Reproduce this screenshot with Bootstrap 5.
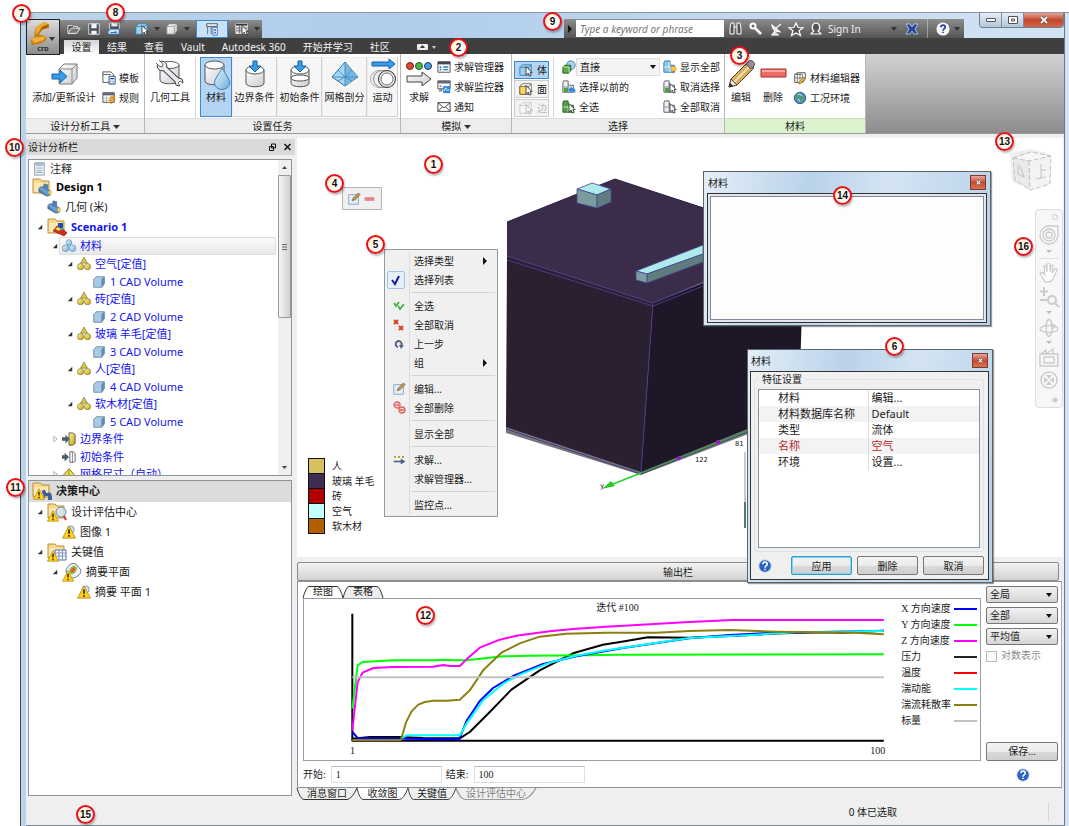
<!DOCTYPE html>
<html lang="zh-CN">
<head>
<meta charset="utf-8">
<meta name="viewport" content="width=device-width, initial-scale=1">
<title>CFD</title>
<link href="https://cdn.jsdelivr.net/npm/bootstrap@5.3.0/dist/css/bootstrap.min.css" rel="stylesheet">
<style>
:root{--ui:"Noto Sans","Noto Sans CJK SC",sans-serif;--song:"Liberation Serif","Noto Sans CJK SC",serif;--caret:url("data:image/svg+xml,%3Csvg xmlns='http://www.w3.org/2000/svg' viewBox='0 0 8 8'%3E%3Cpath d='M1 2h6L4 6z' fill='%23111'/%3E%3C/svg%3E")}
body{font-family:var(--ui);font-size:10px;line-height:14px;color:#1b1b1b;background:#fff}
button,input,select{font-family:inherit;font-size:inherit;line-height:14px;color:inherit}
button{padding:0;border:0;background:none;white-space:nowrap}
svg{display:block;flex:none;overflow:visible}
.i14{width:14px;height:14px}.i16{width:16px;height:16px}.i20{width:20px;height:20px}.i32{width:32px;height:32px}
.frame{margin:12px 0 0 20px;min-height:calc(100vh - 12px);border-left:1px solid #3f4a56;border-top:1px solid #8f98a2;padding:0 4px 2px 5px;background:linear-gradient(90deg,#bcd3ea,#aecdeb 35%,#bdd5ee 60%,#d3e3f3)}
.frame-body{border-right:1px solid #6c7885;border-bottom:1px solid #7c8793}
/* title bar */
.titlebar{height:25px}
.appbtn{left:0;top:6px;width:34px;height:36px;border:1px solid #222;background:linear-gradient(#dcdcdc,#8b8b8b);z-index:3}
.app-logo{left:4px;top:2px}
.qat{margin:7px 0 0 34px;width:202px;height:18px;background:linear-gradient(#8c8c8c,#505050)}
.qat button{height:18px;display:flex;align-items:center;justify-content:center;width:20px}
.qat .on{width:32px;background:#c9e2fa;border:1px solid #3f88cf}
.qat .narrow{width:10px}
.car{width:0;height:0;border:3px solid transparent;border-top:4px solid #333;border-bottom:0}
.infobar{margin:6px 100px 0 auto;width:400px;height:19px;background:linear-gradient(#8c8c8c,#545454);color:#f1f1f1}
.infobar input{width:148px;height:17px;border:0;border-radius:0;padding:2px 4px;font-style:italic;background:#fff;color:#555}
.infobar input::placeholder{color:#777}
.winbtns{right:0;top:0;height:15px;border:1px solid #6f7f8f;border-top:0;border-radius:0 0 4px 4px;overflow:hidden}
.winbtns button{width:22px;border-right:1px solid #7c8d9d;background:linear-gradient(#e6eef6,#b4c6d8);display:flex;align-items:center;justify-content:center}
.winbtns .x{width:39px;border:0;background:linear-gradient(#e2a595,#c4472f 50%,#cf6648)}
/* tabs */
.tabrow{height:16px;background:#3f3f3f;color:#f2f2f2;padding:2px 0 0 38px;gap:17px}
.tabrow a{color:inherit;text-decoration:none;height:14px;text-align:center;white-space:nowrap}
.tabrow a.on{background:linear-gradient(#d4d4d4,#fff);color:#222;width:35px;margin-right:-9px}
/* ribbon */
.ribbon{height:80px;background:#fff;border-bottom:1px solid #999}
.pane-grp{display:flex;flex-direction:column;flex:none;border-right:1px solid #b7b7b7}
.pane-main{height:64px;padding-top:3px;display:flex}
.pane-ttl{height:15px;background:#ededed;border-top:1px solid #ddd;text-align:center;line-height:14px}
.g1{width:119px}.g2{width:256px}.g3{width:111px}.g4{width:213px}.g5{width:141px}
.g5 .pane-ttl{background:#dcf3cf;border-color:#c4e0b5}
.ribbon-rest{background:linear-gradient(#d2d2d2,#8d8d8d)}
.bigb{display:flex;flex-direction:column;align-items:center;height:60px;border:1px solid transparent}
.bigb.boxed{background:#f6f6f6;border-color:#ececec #cfcfcf #cfcfcf #ececec}
.bigb.on{background:#b4d4f3;border-color:#3b88d3}
.w31{width:31px}.w32{width:32px}.w36{width:36px}.w45{width:45px}.w50{width:50px}.w76{width:76px}
.smb{display:flex;align-items:center;gap:3px;height:20px}
.togs{margin:0 0 0 2px}
.tog{width:35px;height:18px;display:flex;align-items:center;gap:4px;padding-left:4px;border:1px solid #ccc;background:#f3f3f3;margin-bottom:1px}
.tog.on{background:#b4d4f3;border-color:#3b88d3}
.tog:disabled{color:#bbb;opacity:1}
.selcol{width:101px}
.vline{width:1px;background:#d6d6d6}
.pick{appearance:none;width:84px;height:18px;border:1px solid #ddd;background:#f4f4f4 var(--caret) right 2px center/8px no-repeat;padding:0 3px;border-radius:0}
/* work area */
.work{background:#efefef;padding-top:4px}
.side{width:271px;padding:1px 5px 3px 2px;flex:none}
.side-head{background:#d9d9d9;height:16px;margin:0 -3px 4px -2px;padding:0 4px 0 2px}
.treebox{border:1px solid #8d939c;background:#fff;flex:1 1 0;min-height:0;font-size:11px;position:relative;overflow:hidden}
.tree{list-style:none;margin:0;padding:0}
.tree li{display:flex;align-items:center;gap:4px;height:18px;padding-left:3px;white-space:nowrap}
.tree .exp{width:15px;margin-right:-4px;display:flex;padding-left:5px}
.blue{color:#1414f0}
.tree .t17{height:17px}.tree .t20{height:20px}
.tree .l1{padding-left:18px}.tree .l2{padding-left:18px}.tree .l3{padding-left:33px}.tree .l4{padding-left:63px}.tree .l2x{padding-left:33px}.tree .l3x{padding-left:48px}
.tree .selrow{margin-right:2px;background:linear-gradient(#fafafa,#e9e9e9);border:1px solid #ddd;border-radius:2px;margin-left:30px;padding-left:2px}
.tree .selrow .exp{position:absolute;left:18px}
.sbar{width:13px;background:#efefef;flex:none}
.sbar .arrow{height:15px;width:13px}
.sbar .grip{height:143px;border:1px solid #999;border-radius:1px;background:linear-gradient(90deg,#f5f5f5,#cfcfcf)}
.gone{background:#dcdcdc;font-weight:bold}
.tree.wide li{height:20px}.tree.wide li:first-child{height:21px}
/* viewport */
.view{background:#fff;position:relative;flex:1 1 auto;min-height:419px;z-index:2;margin-right:1px}
.scene{position:absolute;left:209px;top:40px;width:300px;height:320px}
.legend-bar{position:absolute;left:11px;top:320px}
.legend-bar div{height:15px;display:flex;gap:7px;align-items:center}
.legend-bar i{width:17px;height:15px;border:1px solid #111;border-bottom:0}
.legend-bar div:last-child i{height:16px;border-bottom:1px solid #111}
.mini{position:absolute;left:45px;top:49px;width:40px;height:23px;border:1px solid #b5b5b5;background:#f0f0f0}
.ctx{position:absolute;left:87px;top:111px;width:114px;border:1px solid #999;background:#f0f0f0;padding:1px 2px 2px}
.ctx button{display:flex;align-items:center;width:100%;height:19px;text-align:left}
.ctx .slot{width:24px;display:flex;justify-content:center;margin-right:3px}
.ctx .chk{width:18px;height:18px;border:1px solid #9dc3ea;border-radius:2px;background:#e6f0fa;margin-right:9px;align-items:center}
.ctx hr{height:1px;border:0;background:#d5d5d5;opacity:1;margin:3px 0 3px 24px}
.ctx:before{content:"";position:absolute;left:24px;top:2px;bottom:2px;width:1px;background:#ddd}
.dlg{position:absolute;border:1px solid #5b6570;background:linear-gradient(100deg,#e4eef7,#b9d2ea 35%,#d4e4f3 60%,#b7d1ea);box-shadow:1px 1px 1px #4448;display:flex;flex-direction:column;padding:0 3px 2px}
.dlg-ttl{height:21px;display:flex;align-items:center;justify-content:space-between;padding:0 1px 0 1px}
.dlg-x{width:16px;height:15px;border:1px solid #7c3a30;background:linear-gradient(#e6a899,#c84b32 50%,#d87253);display:flex;align-items:center;justify-content:center}
.dlg-in{border:1px solid #333;flex:1}
.dlg-a{left:406px;top:33px;width:288px;height:155px}
.dlg-a .dlg-in{padding:2px;background:#e2e4ee}
.dlg-a .dlg-in div{background:#fdfdfd;border:1px solid #889;height:100%}
.dlg-b{left:450px;top:211px;width:246px;height:234px;padding:0 3px 2px 2px}
.dlg-b .dlg-in{background:#f0f0f0;padding:1px 4px 4px 3px;display:flex;flex-direction:column}
.dlg-b fieldset{border:1px solid #dbe3ea;border-radius:3px;margin-top:6px;padding:0 3px 3px;flex:1;display:flex}
.dlg-b legend{font-size:10px;line-height:14px;width:auto;float:none;margin:-8px 0 0 1px;padding:0 3px;background:#f0f0f0;position:absolute}
.propwrap{border:1px solid #8d939c;background:#fff;margin-top:9px;flex:1}
.prop{width:100%;font-size:11px;line-height:16px;table-layout:fixed}
.prop td{padding:0 0 0 3px;border:0}.prop td:first-child{width:109px;padding-left:19px;border-right:1px solid #ddd}
.prop tr:nth-child(even){background:#f3f3f3}
.red{color:#b32a2a}
.winb{border:1px solid #777;border-radius:2px;background:linear-gradient(#f3f3f3,#ececec 50%,#dadada 51%,#cfcfcf);height:19px;width:61px}
.winb.def{border-color:#2c9fca;box-shadow:inset 0 0 0 1px #7fd4f0}
.btn-row{gap:5px}
.cube{position:absolute;right:9px;top:11px;width:46px;height:44px}
.navb{position:absolute;right:0;top:71px;width:28px;height:199px;border:1px solid #ddd;border-radius:4px;background:#f7f7f7;display:flex;flex-direction:column;align-items:center;padding-top:14px;color:#c9cbcd}
.navb button{display:block}
.tiny{width:0;height:0;border:3px solid transparent;border-top-color:#bbb;border-bottom:0;margin:4px 0 5px}
/* output */
.outbtn{height:19px;margin:5px 5px 0 0;border:1px solid #8a8a8a;border-radius:2px;background:linear-gradient(#f2f2f2,#d2d2d2)}
.outp{background:#fff;border:1px solid #8d939c;border-right-color:#aaa;margin-right:2px;padding:4px 3px 4px 5px;font-family:var(--song)}
.tabsh{position:relative;height:12px;line-height:12px;text-align:center}
.tabsh svg{position:absolute;inset:0;width:100%;height:100%}
.tabsh span{position:relative}
.s40{width:40px}.s48{width:48px}.s51{width:51px}.s60{width:60px}.s80{width:80px}
.plotbox{border:1px solid #999ea6;height:163px;padding:2px 3px 0 46px}
.plot{width:100%;height:134px}
.plot-h{height:14px;margin-bottom:-5px;text-align:center}
.key{width:76px;margin-left:16px}
.key li{height:16px;line-height:16px;display:flex;justify-content:space-between;align-items:center;white-space:nowrap}
.key hr{width:23px;height:2px;margin:0;border:0;opacity:1}
.field{width:111px;height:17px;border:1px solid #dcdfe4;border-top-color:#b9bcc2;padding:0 4px;margin:0 4px 0 5px;border-radius:0}
.ctl{width:72px;flex:none;margin-left:5px;display:flex;flex-direction:column}
.ctl select{appearance:none;width:100%;height:17px;border:1px solid #777;border-radius:2px;padding:0 3px;margin-bottom:4px;background:var(--caret) right 4px center/8px no-repeat,linear-gradient(#f2f2f2,#d5d5d5)}
.ctl input[type=checkbox]{appearance:none;width:11px;height:11px;border:1px solid #bbb;background:#fafafa;margin:0}
.runrow{margin-top:5px}
.btabs{font-family:var(--song);height:11px}
.status{height:26px;padding-right:15px;background:#efefef;gap:151px}
/* numbered callouts */
.pin{position:absolute;width:19px;height:19px;margin:-10px 0 0 -10px;border-radius:50%;border:2px solid #e8101a;background:radial-gradient(circle at 60% 65%,#fff 10%,#fdeccb);box-shadow:1px 2px 2px #0004;font:bold 10px/15px "Liberation Sans",sans-serif;text-align:center;color:#111;z-index:9}
.p1{left:434px;top:165px}.p2{left:459px;top:48px}.p3{left:740px;top:56px}.p4{left:335px;top:184px}.p5{left:376px;top:245px}.p6{left:895px;top:347px}.p7{left:22px;top:14px}.p8{left:116px;top:13px}.p9{left:553px;top:22px}.p10{left:15px;top:148px}.p11{left:16px;top:488px}.p12{left:426px;top:616px}.p13{left:1005px;top:142px}.p14{left:843px;top:196px}.p15{left:86px;top:815px}.p16{left:1024px;top:247px}
</style>
</head>
<body>
<svg width="0" height="0" class="position-absolute" aria-hidden="true">
<defs>
<linearGradient id="gb" x2="1" y2="1"><stop stop-color="#e8f5fd"/><stop offset="1" stop-color="#6fb0dc"/></linearGradient>
<linearGradient id="gg" x2="1" y2="1"><stop stop-color="#fff"/><stop offset="1" stop-color="#c9cdd2"/></linearGradient>
<linearGradient id="gy" x2="1" y2="1"><stop stop-color="#fff6a0"/><stop offset="1" stop-color="#c79f0c"/></linearGradient>
<symbol id="cubeg" viewBox="0 0 16 16"><path d="M2 5l3-3h9v8l-3 4H2z" fill="url(#gg)" stroke="#777"/><path d="M2 5h9v9M11 5l3-3" fill="none" stroke="#999"/></symbol>
<symbol id="cubeb" viewBox="0 0 16 16"><path d="M2 5l3-3h9v8l-3 4H2z" fill="#a9c9e6" stroke="#6c8aa6"/><path d="M11 5v9l3-4V2z" fill="#5c8fba" stroke="#6c8aa6" stroke-width=".6"/></symbol>
<symbol id="cur" viewBox="0 0 16 16"><path d="M8 4v10l2.500-2.500L12 15l2-1-1.500-3H15z" fill="#fff" stroke="#222" stroke-width=".9"/></symbol>
<symbol id="selb" viewBox="0 0 16 16"><path d="M1 5l3-3h10v8l-3 4H1z" fill="#9bd0f0" stroke="#3d7ba8"/><path d="M1 5h10v9M11 5l3-3" fill="none" stroke="#3d7ba8"/><use href="#cur"/></symbol>
<symbol id="sely" viewBox="0 0 16 16"><path d="M1 5l3-3h10v8l-3 4H1z" fill="#fff" stroke="#665"/><path d="M1 5h10v9H1z" fill="#ffd954" stroke="#665"/><path d="M11 5l3-3" stroke="#665"/><use href="#cur"/></symbol>
<symbol id="seln" viewBox="0 0 16 16"><g opacity=".35"><path d="M1 5l3-3h10v8l-3 4H1z" fill="#fff" stroke="#777"/><path d="M1 5h10v9M11 5l3-3" fill="none" stroke="#777"/><use href="#cur"/></g></symbol>
<symbol id="add" viewBox="0 0 32 32"><path d="M11 11l5-5h13v14l-5 6H11z" fill="url(#gg)" stroke="#777"/><path d="M11 11h13v14M24 11l5-5" fill="none" stroke="#888"/><path d="M4 16h8v-4l7 6.500-7 6.500v-4H4z" fill="#3a9be6" stroke="#1561a5"/></symbol>
<symbol id="tmpl" viewBox="0 0 16 16"><path d="M1 1h9l3 3v9H1z" fill="#fff" stroke="#444"/><path d="M1 4h9" stroke="#555"/><path d="M8 6h7v9H8z" fill="#e6f1fb" stroke="#246"/><path d="M9.500 8h4v1.500h-4zM9.500 11h1v1h-1zM12 11h1v1h-1zM9.500 13h1v1h-1zM12 13h1v1h-1z" fill="#247"/></symbol>
<symbol id="rule" viewBox="0 0 16 16"><path d="M1 2h13v11H1z" fill="#fff" stroke="#444"/><path d="M1 2h13v3H1z" fill="#667"/><path d="M1 8h13M1 10.500h13M5 5v8M9.500 5v8" stroke="#999" stroke-width=".7"/><path d="M11 6l-3 5h3l-1 4 5-6h-3l2-3z" fill="#ffae1e" stroke="#c46c00" stroke-width=".6"/></symbol>
<symbol id="tool" viewBox="0 0 32 32"><path d="M6 7v15c0 5 19 5 19 0V7" fill="url(#gg)" stroke="#555"/><ellipse cx="15.500" cy="7" rx="9.500" ry="3.500" fill="#fff" stroke="#555"/><path d="M8 8L25 24" stroke="#444" stroke-width="6"/><circle cx="8" cy="8" r="4.800" fill="#e9ebee" stroke="#444"/><circle cx="25" cy="24" r="4" fill="#e9ebee" stroke="#444"/><path d="M8 8L25 24" stroke="#e9ebee" stroke-width="4"/><path d="M3 3l5 5M30 29l-5-5" stroke="#fff" stroke-width="3.500"/><path d="M5 2l4 4-1 3-3-1-3-3M29 25l-3-2-2 2 2 3" stroke="#444" fill="none" stroke-width=".8"/></symbol>
<symbol id="mat" viewBox="0 0 32 32"><path d="M5 7v16c0 5 19 5 19 0V7" fill="url(#gg)" stroke="#555"/><ellipse cx="14.500" cy="7" rx="9.500" ry="4" fill="#fff" stroke="#555"/><path d="M22 10c4 7 7.500 11 7.500 15a7.500 6.500 0 01-15 0c0-4 4-8 7.500-15z" fill="url(#gb)" stroke="#3a7fb5"/></symbol>
<symbol id="bc" viewBox="0 0 32 32"><path d="M7 12v13c0 5 18 5 18 0V12" fill="url(#gg)" stroke="#555"/><ellipse cx="16" cy="12" rx="9" ry="4" fill="#fff" stroke="#555"/><path d="M14 3h4v5h4l-6 6-6-6h4z" fill="#3a9be6" stroke="#1561a5"/></symbol>
<symbol id="initc" viewBox="0 0 32 32"><path d="M7 12v13c0 5 18 5 18 0V12" fill="url(#gg)" stroke="#555"/><ellipse cx="16" cy="12" rx="9" ry="4" fill="#fff" stroke="#555"/><path d="M7 20c0 4 18 4 18 0s-18-4-18 0" fill="#fff" stroke="#555"/><path d="M14 3h4v5h4l-6 6-6-6h4z" fill="#3a9be6" stroke="#1561a5"/></symbol>
<symbol id="mesh" viewBox="0 0 32 32"><path d="M16 4L3 19l13 9 13-9z" fill="#a5d6f2" stroke="#2d6f9f"/><path d="M16 4v24l13-9z" fill="#74b8e0"/><path d="M16 4v24M3 19h26M9 12l7 7 7-7M9 23l7-4 7 4" stroke="#3b82b2" fill="none" stroke-width=".8"/></symbol>
<symbol id="motion" viewBox="0 0 32 32"><path d="M5 4h17V1l6 5-6 5V8H5z" fill="#3a9be6" stroke="#1561a5"/><circle cx="12" cy="21" r="8.500" fill="#f4f4f4" stroke="#aaa"/><circle cx="15" cy="21" r="8.500" fill="#eee" stroke="#888"/><circle cx="20" cy="21" r="8.500" fill="#e2e2e2" stroke="#333"/><circle cx="20" cy="21" r="6" fill="#fff" stroke="#777"/></symbol>
<symbol id="solve" viewBox="0 0 32 32"><circle cx="7" cy="8" r="3.500" fill="#e3482c" stroke="#622"/><circle cx="16" cy="8" r="3.500" fill="#46b94b" stroke="#252"/><circle cx="25" cy="8" r="3.500" fill="#4a9be8" stroke="#235"/><path d="M4 18h15v-4l9 7-9 7v-4H4z" fill="url(#gg)" stroke="#444"/></symbol>
<symbol id="lst" viewBox="0 0 16 16"><path d="M1 2h14v12H1z" fill="#fff" stroke="#445"/><path d="M1 2h14v3H1z" fill="#445"/><path d="M3 7h2v2H3zM3 10h2v2H3z" fill="#2d7bd0"/><path d="M7 8h6M7 11h6" stroke="#2d7bd0" stroke-width="1.500"/></symbol>
<symbol id="mon" viewBox="0 0 16 16"><path d="M1 1h14v9H1z" fill="#fff" stroke="#445"/><path d="M1 1h14v3H1z" fill="#667"/><path d="M3 6h2v2H3zM3 9h3v4H2z" fill="#888"/><path d="M7 7h8v8H7z" fill="#2d87e0"/><path d="M8 13l2-4 2 3 2-1" stroke="#fff" fill="none"/></symbol>
<symbol id="mail" viewBox="0 0 16 16"><path d="M1 3h14v10H1zl7 6 7-6M1 13l5-5M15 13l-5-5" fill="#fff" stroke="#333"/></symbol>
<symbol id="direct" viewBox="0 0 16 16"><circle cx="10" cy="6" r="5" fill="#a8d4f3" stroke="#3679ab"/><path d="M1 8l2-2h7v6l-2 3H1z" fill="#5aa94b" stroke="#245c1c"/><path d="M1 8h7v7" fill="none" stroke="#cfeec4"/></symbol>
<symbol id="sg" viewBox="0 0 16 16"><path d="M1 3l1-2h5v5h6v8H1z" fill="#51a044" stroke="#235c1c"/><path d="M1 8h6v6M7 6v3" stroke="#cdeec4" fill="none"/></symbol>
<symbol id="sw" viewBox="0 0 16 16"><path d="M1 3l1-2h5v5h6v8H1z" fill="#eceef0" stroke="#556"/><path d="M1 8h6v6M7 6v3" stroke="#889" fill="none"/></symbol>
<symbol id="sprev" viewBox="0 0 16 16"><use href="#sw"/><path d="M2 9h5v5H2z" fill="#51a044"/><path d="M7 11l4-4v2c4 0 5 2 4 6-1-2-2-2-4-2v2z" fill="#2f8be0"/></symbol>
<symbol id="sall" viewBox="0 0 16 16"><use href="#sg"/><use href="#cur"/></symbol>
<symbol id="show" viewBox="0 0 16 16"><path d="M1 3l1-2h6v5h5v8H1z" fill="#8cc8ee" stroke="#336e9c"/><path d="M1 8h7v6M7 2v6" stroke="#e7f5fd" fill="none"/><circle cx="12" cy="10" r="3" fill="#ffc73c" stroke="#b97900" stroke-width=".6"/><path d="M11 13h2v2h-2z" fill="#777"/></symbol>
<symbol id="desel" viewBox="0 0 16 16"><use href="#sw"/><path d="M2 9h5v5H2z" fill="#51a044"/><use href="#cur"/></symbol>
<symbol id="none" viewBox="0 0 16 16"><use href="#sw"/><use href="#cur"/></symbol>
<symbol id="pencil" viewBox="0 0 32 32"><path d="M4 29l2-8L23 4l6 6-17 17z" fill="#d6ad62" stroke="#5b4520"/><path d="M9 24L26 7" stroke="#f5dfa9" stroke-width="2"/><path d="M21 6l3-3c3-2 7 2 5 5l-3 3z" fill="#998a98" stroke="#555"/><path d="M4 29l2-8 6 6z" fill="#f1e2c6" stroke="#555"/><path d="M4 29l1-4 3 3z" fill="#222"/></symbol>
<symbol id="minus" viewBox="0 0 32 32"><path d="M4 11h25v8H4z" fill="#ef6a64" stroke="#a32f2c"/><path d="M5 12h23v2H5z" fill="#f8a8a2"/></symbol>
<symbol id="mated" viewBox="0 0 16 16"><path d="M2 4l3-2h9v7l-3 4H2z" fill="#fff" stroke="#444"/><path d="M2 4h9v9M5 2v11M8 2v11M2 8h12" fill="none" stroke="#555" stroke-width=".8"/><path d="M6 14l6-7 2 2-6 6z" fill="#f1b33b" stroke="#8a5c08" stroke-width=".7"/></symbol>
<symbol id="globe" viewBox="0 0 16 16"><circle cx="8" cy="8" r="6.500" fill="#4b93c9" stroke="#2b4b63"/><path d="M3 4l4-1 3 3 3 1-2 3-3 4-1-4-4-2z" fill="#4f9a72"/><path d="M5 4c2-1 4 0 5 2M6 9l2 3" stroke="#e4f0f5" fill="none"/></symbol>
<symbol id="open" viewBox="0 0 16 16"><path d="M1 12V4h5l1 1h5v2" fill="#555" stroke="#e8e8e8"/><path d="M1 13l4-6h10l-4 6z" fill="#777" stroke="#fff"/></symbol>
<symbol id="save" viewBox="0 0 16 16"><path d="M2 2h12v12H2z" fill="#47505d" stroke="#e6e6e6"/><path d="M5 2h6v5H5zM5 10h6v4H5z" fill="#f4f4f4"/></symbol>
<symbol id="sview" viewBox="0 0 16 16"><path d="M3 1h11v8H3z" fill="#47505d" stroke="#e6e6e6"/><path d="M5 1h7v4H5z" fill="#eee"/><path d="M1 11l3-3h10v6H1z" fill="#cfe4f7" stroke="#245c96"/><path d="M4 12h7l-2-2" fill="none" stroke="#1a64b4"/></symbol>
<symbol id="layout" viewBox="0 0 16 16"><path d="M2 2h12v3H2z" fill="#fff" stroke="#345"/><path d="M3 5v9M7 5v9" stroke="#567"/><path d="M9 6h5v9H9z" fill="#fff" stroke="#2a6cb0"/><path d="M10.500 8h2v2h-2zM10.500 11h2v2h-2z" fill="#2a6cb0"/></symbol>
<symbol id="tblc" viewBox="0 0 16 16"><path d="M1 2h13v11H1z" fill="#ddd" stroke="#f4f4f4"/><path d="M1 2h13v2H1z" fill="#333"/><path d="M1 7h13M1 10h13M5 4v9" stroke="#666"/><use href="#cur"/></symbol>
<symbol id="logo" viewBox="0 0 20 24"><path d="M4 6L13 0l5 2v4l-7 2-3 5 8 2-1 4-4 3-10 2-3-5 5-2z" fill="#c97c10"/><path d="M4 6L13 0l5 2-7 3-4 6-2 2z" fill="#efac35"/><path d="M0 18l5-2 10-1-3 4-9 3z" fill="#f3b23e"/><path d="M11 5l7-3v4l-7 2-3 4z" fill="#a9640a"/></symbol>
<symbol id="note" viewBox="0 0 16 16"><path d="M3 1h11v14H3z" fill="#e8eef3" stroke="#8a99a6"/><path d="M5 4h7M5 7h7M5 10h7M5 12h7" stroke="#9aabba"/><path d="M3 1h11v2H3z" fill="#9db0c0"/></symbol>
<symbol id="fold" viewBox="0 0 20 20"><path d="M1 2h7l2 2h7v12H1z" fill="#f6d98c" stroke="#b9903b"/><path d="M2 6h14v9H2z" fill="#fbe8b3"/></symbol>
<symbol id="geo" viewBox="0 0 16 16"><path d="M1 6l3-2 2 1 1-4 4 1v5l3 2v5l-4 1-9-5z" fill="#4f83b5" stroke="#355a7e" stroke-width=".7"/><path d="M1 6l3-1 8 5-1 4z" fill="#6da2d2"/><ellipse cx="13.500" cy="11" rx="1.800" ry="2.600" fill="#f4df43" stroke="#876" stroke-width=".5"/></symbol>
<symbol id="des" viewBox="0 0 20 20"><use href="#fold"/><use href="#geo" x="6" y="6" width="14" height="14"/></symbol>
<symbol id="scn" viewBox="0 0 20 20"><use href="#fold"/><path d="M6 14l4-5 5 2 5 5-3 3z" fill="#d8281c" stroke="#622" stroke-width=".6"/><path d="M11 6h5v6h-5z" fill="#2748b8"/><path d="M8 12l3-2 3 2-2 2z" fill="#f2df2c"/><path d="M13 11h3v2h-3z" fill="#2cb7a8"/></symbol>
<symbol id="matb" viewBox="0 0 16 16"><g stroke="#3d7098" stroke-width=".6"><circle cx="8" cy="4" r="3.200" fill="url(#gb)"/><circle cx="4" cy="10.500" r="3.800" fill="url(#gb)"/><circle cx="12" cy="10.500" r="3.800" fill="url(#gb)"/></g></symbol>
<symbol id="maty" viewBox="0 0 16 16"><path d="M8 0l4 7H4z" fill="#d9c54d" stroke="#665a1c" stroke-width=".6"/><g stroke="#665a1c" stroke-width=".6"><circle cx="4" cy="11" r="3.600" fill="url(#gy)"/><circle cx="12" cy="11" r="3.600" fill="url(#gy)"/></g></symbol>
<symbol id="bct" viewBox="0 0 16 16"><path d="M8 1h4l3 2v10l-3 2H8z" fill="url(#gy)" stroke="#554"/><path d="M0 6h4V3l5 5-5 5v-3H0z" fill="#46606f"/></symbol>
<symbol id="ict" viewBox="0 0 16 16"><path d="M9 2h4l2 2v9l-2 1H9z" fill="#fff" stroke="#555"/><path d="M12 2v12" stroke="#888"/><path d="M0 6h3V3l5 5-5 5v-3H0z" fill="#46606f"/></symbol>
<symbol id="msh" viewBox="0 0 16 16"><path d="M8 2L0 11l8 5 8-5z" fill="#f2df47" stroke="#776c1e"/><path d="M8 2v14M0 11h16" stroke="#9a8d22"/></symbol>
<symbol id="warn" viewBox="0 0 16 16"><path d="M8 1l7.500 14H.5z" fill="#ffcf19" stroke="#a87d00" stroke-width=".8"/><path d="M8 5v5M8 11.500v2" stroke="#111" stroke-width="1.700"/></symbol>
<symbol id="dec" viewBox="0 0 20 20"><use href="#fold"/><path d="M10 11c0-3 3-3 4 0s5-3 6 5v3h-4v-4h-3v3z" fill="#3d5f9c"/><use href="#warn" x="1" y="7" width="12" height="12"/></symbol>
<symbol id="dev" viewBox="0 0 20 20"><use href="#fold"/><circle cx="14" cy="10" r="5" fill="#cfe3f2cc" stroke="#6d8ba6"/><path d="M17 14l2 4" stroke="#c33" stroke-width="2"/><use href="#warn" x="0" y="8" width="12" height="12"/></symbol>
<symbol id="img" viewBox="0 0 16 16"><circle cx="10" cy="5" r="4" fill="#cfe3f2" stroke="#7894ab"/><use href="#warn"/></symbol>
<symbol id="keyv" viewBox="0 0 20 20"><use href="#fold"/><path d="M8 8h11v10H8z" fill="#fff" stroke="#4b6ea4"/><path d="M8 11h11M8 14h11M12 8v10M15.500 8v10" stroke="#7795c4"/><use href="#warn" x="0" y="8" width="12" height="12"/></symbol>
<symbol id="sum" viewBox="0 0 20 20"><path d="M4 10c0-6 6-10 10-8l5 6c0 5-5 8-9 8z" fill="#eef3f8" stroke="#6e7e8e"/><ellipse cx="11" cy="8" rx="3.500" ry="5" transform="rotate(35 11 8)" fill="#8fce52"/><ellipse cx="11" cy="8" rx="1.800" ry="3" transform="rotate(35 11 8)" fill="#e3562e"/><use href="#warn" x="0" y="8" width="12" height="12"/></symbol>
<symbol id="ep" viewBox="0 0 8 8"><path d="M7 1v6H1z" fill="#333"/></symbol>
<symbol id="cl" viewBox="0 0 8 8"><path d="M2 1v6l4-3z" fill="#fff" stroke="#999" stroke-width=".8"/></symbol>
<symbol id="edit" viewBox="0 0 16 16"><path d="M2 3h11v11H2z" fill="#e3eefb" stroke="#86a1c0"/><path d="M6 10l1-3 6-6 2 2-6 6z" fill="#c99a48" stroke="#5a4320" stroke-width=".6"/></symbol>
<symbol id="help" viewBox="0 0 16 16"><circle cx="8" cy="8" r="7" fill="#2d62c4" stroke="#b4c7e8"/><path d="M5.500 6c0-3.500 5-3.300 5 0 0 2-2.500 1.800-2.500 4M8 11v1.700" stroke="#fff" stroke-width="1.800" fill="none"/></symbol>
<symbol id="xx" viewBox="0 0 8 8"><path d="M1 1l6 6M7 1L1 7" stroke="#444" stroke-width="3"/><path d="M1 1l6 6M7 1L1 7" stroke="#fff" stroke-width="1.800"/></symbol>
</defs>
</svg>

<div class="frame d-flex">
<div class="frame-body d-flex flex-column flex-grow-1 position-relative">
  <header class="titlebar d-flex position-relative">
    <button class="appbtn position-absolute" aria-label="CFD">
      <svg class="position-absolute app-logo" width="20" height="23"><use href="#logo"/></svg>
      <span class="car position-absolute end-0 top-50 me-1 mt-n1"></span>
      <svg width="32" height="34"><text x="16" y="31" font-size="6" font-weight="bold" text-anchor="middle" fill="#222">CFD</text></svg>
    </button>
    <div class="qat d-flex align-items-center">
      <span class="ms-1"></span>
      <button aria-label="打开"><svg class="i14"><use href="#open"/></svg></button>
      <button aria-label="保存"><svg class="i14"><use href="#save"/></svg></button>
      <button aria-label="保存视图"><svg class="i14"><use href="#sview"/></svg></button>
      <span class="ms-2"></span>
      <button aria-label="选择体"><svg class="i14"><use href="#selb"/></svg></button>
      <button class="narrow" aria-label="更多"><span class="car"></span></button>
      <button aria-label="显示"><svg class="i14"><use href="#cubeg"/></svg></button>
      <button class="narrow" aria-label="更多"><span class="car"></span></button>
      <button class="on ms-1" aria-label="布局"><svg class="i14"><use href="#layout"/></svg></button>
      <button class="ms-1" aria-label="表"><svg class="i14"><use href="#tblc"/></svg></button>
      <button class="narrow" aria-label="自定义"><span class="car"></span></button>
    </div>
    <div class="infobar d-flex align-items-center">
      <button class="px-1" aria-label="展开"><svg width="4" height="8"><path d="M0 0l4 4-4 4z" fill="#111"/></svg></button>
      <input type="text" placeholder="Type a keyword or phrase" aria-label="搜索">
      <div class="d-flex align-items-center gap-1 ps-1">
        <svg width="16" height="14" viewBox="0 0 16 14"><path d="M2 12V6l1-5h3v11zM9 12V1h3l1 5v6z" fill="#555" stroke="#fff"/><path d="M6 5h3" stroke="#fff"/></svg>
        <svg width="16" height="14" viewBox="0 0 16 14"><circle cx="5" cy="4" r="2.500" fill="#666" stroke="#fff" stroke-width="2"/><path d="M7 6l6 6" stroke="#fff" stroke-width="2.500"/></svg>
        <svg width="16" height="14" viewBox="0 0 16 14"><path d="M4 3c0 5 4 7 8 7zM8 6l5-4M7 9l-3 4h7" fill="#ddd" stroke="#fff" stroke-width="1.200"/></svg>
        <svg width="16" height="14" viewBox="0 0 16 14"><path d="M8 1l2 4.500 5 .3-4 3 1.500 4.700L8 11l-4.500 2.500L5 8.800l-4-3 5-.3z" fill="#555" stroke="#fff" stroke-width="1.200"/></svg>
        <svg width="16" height="14" viewBox="0 0 16 14"><path d="M3 12c0-2 3-2 3-3-3-2-2-8 2-8s5 6 2 8c0 1 3 1 3 3z" fill="#555" stroke="#fff" stroke-width="1.200"/></svg>
      </div>
      <button class="ms-1">Sign In</button>
      <span class="car ms-auto me-2"></span>
      <svg width="14" height="12" viewBox="0 0 14 12"><path d="M1 1h4l2 3 2-3h4l-3 5 3 5H9L7 8l-2 3H1l3-5z" fill="#22449b" stroke="#cdd9f2" stroke-width=".8"/></svg>
      <span class="mx-2 vline h-100 opacity-50"></span>
      <svg width="14" height="14" viewBox="0 0 16 16"><circle cx="8" cy="8" r="7.500" fill="#f6f8fc"/><path d="M5.500 6c0-3.500 5-3.300 5 0 0 2-2.500 1.800-2.500 4M8 11v1.700" stroke="#21449c" stroke-width="2" fill="none"/></svg>
      <span class="car ms-1 me-1"></span>
    </div>
    <div class="winbtns d-flex position-absolute">
      <button aria-label="最小化"><svg width="10" height="4"><path d="M.5.500h9v3h-9z" fill="#fff" stroke="#555"/></svg></button>
      <button aria-label="还原"><svg width="10" height="8"><path d="M.5.500h9v7h-9zM3.500 3h3v2h-3z" fill="#fff" stroke="#555"/></svg></button>
      <button class="x" aria-label="关闭"><svg width="8" height="8"><use href="#xx"/></svg></button>
    </div>
  </header>

  <nav class="tabrow d-flex">
    <a href="#" class="on">设置</a><a href="#">结果</a><a href="#">查看</a><a href="#">Vault</a><a href="#">Autodesk 360</a><a href="#">开始并学习</a><a href="#">社区</a>
    <svg class="mt-1 ms-2" width="20" height="7"><rect x="2" width="11" height="6" rx="1" fill="#eee"/><path d="M5 4l2.500-3L10 4z" fill="#333"/><path d="M17 2h4l-2 3z" fill="#ccc"/></svg>
  </nav>

  <section class="ribbon d-flex">
    <div class="pane-grp g1">
      <div class="pane-main">
        <button class="bigb w76"><svg class="i32"><use href="#add"/></svg>添加/更新设计</button>
        <div class="d-flex flex-column justify-content-center h-100">
          <button class="smb"><svg class="i14"><use href="#tmpl"/></svg>模板</button>
          <button class="smb"><svg class="i14"><use href="#rule"/></svg>规则</button>
        </div>
      </div>
      <div class="pane-ttl">设计分析工具 <svg class="d-inline" width="7" height="6"><path d="M0 1h7L3.500 5z" fill="#333"/></svg></div>
    </div>
    <div class="pane-grp g2">
      <div class="pane-main">
        <button class="bigb w50"><svg class="i32"><use href="#tool"/></svg>几何工具</button>
        <span class="vline me-1"></span>
        <button class="bigb on w32"><svg class="i32"><use href="#mat"/></svg>材料</button>
        <button class="bigb boxed w45"><svg class="i32"><use href="#bc"/></svg>边界条件</button>
        <button class="bigb boxed w45"><svg class="i32"><use href="#initc"/></svg>初始条件</button>
        <button class="bigb boxed w45"><svg class="i32"><use href="#mesh"/></svg>网格剖分</button>
        <button class="bigb boxed w31"><svg class="i32"><use href="#motion"/></svg>运动</button>
      </div>
      <div class="pane-ttl">设置任务</div>
    </div>
    <div class="pane-grp g3">
      <div class="pane-main">
        <button class="bigb w36"><svg class="i32"><use href="#solve"/></svg>求解</button>
        <div>
          <button class="smb"><svg class="i14"><use href="#lst"/></svg>求解管理器</button>
          <button class="smb"><svg class="i14"><use href="#mon"/></svg>求解监控器</button>
          <button class="smb"><svg class="i14"><use href="#mail"/></svg>通知</button>
        </div>
      </div>
      <div class="pane-ttl">模拟 <svg class="d-inline" width="7" height="6"><path d="M0 1h7L3.500 5z" fill="#333"/></svg></div>
    </div>
    <div class="pane-grp g4">
      <div class="pane-main">
        <div class="togs pt-1">
          <button class="tog on"><svg class="i14"><use href="#selb"/></svg>体</button>
          <button class="tog"><svg class="i14"><use href="#sely"/></svg>面</button>
          <button class="tog" disabled><svg class="i14"><use href="#seln"/></svg>边</button>
        </div>
        <span class="vline mx-1"></span>
        <div class="selcol ms-1">
          <label class="smb gap-0"><svg class="i14"><use href="#direct"/></svg><select class="pick"><option>直接</option></select></label>
          <button class="smb"><svg class="i14"><use href="#sprev"/></svg>选择以前的</button>
          <button class="smb"><svg class="i14"><use href="#sall"/></svg>全选</button>
        </div>
        <div>
          <button class="smb"><svg class="i14"><use href="#show"/></svg>显示全部</button>
          <button class="smb"><svg class="i14"><use href="#desel"/></svg>取消选择</button>
          <button class="smb"><svg class="i14"><use href="#none"/></svg>全部取消</button>
        </div>
      </div>
      <div class="pane-ttl">选择</div>
    </div>
    <div class="pane-grp g5">
      <div class="pane-main">
        <button class="bigb w32"><svg class="i32"><use href="#pencil"/></svg>编辑</button>
        <button class="bigb w32"><svg class="i32"><use href="#minus"/></svg>删除</button>
        <div class="d-flex flex-column justify-content-center ms-1 h-100">
          <button class="smb"><svg class="i14"><use href="#mated"/></svg>材料编辑器</button>
          <button class="smb"><svg class="i14"><use href="#globe"/></svg>工况环境</button>
        </div>
      </div>
      <div class="pane-ttl">材料</div>
    </div>
    <div class="ribbon-rest flex-grow-1"></div>
  </section>

  <main class="work d-flex flex-grow-1">
    <aside class="side d-flex flex-column">
      <div class="side-head d-flex align-items-center justify-content-between"><span>设计分析栏</span>
        <span class="d-flex gap-2"><svg width="7" height="8"><path d="M2.500 1h4v4h-4zM.5 3.500h4v4h-4z" fill="#d9d9d9" stroke="#111"/></svg><svg width="7" height="8"><path d="M.5 1l6 6M6.500 1l-6 6" stroke="#111" stroke-width="1.500"/></svg></span></div>
      <div class="treebox d-flex mb-1">
        <ul class="tree flex-grow-1">
          <li class="t17"><svg class="i14"><use href="#note"/></svg>注释</li>
          <li class="t20 fw-bold text-black"><svg class="i20"><use href="#des"/></svg>Design 1</li>
          <li class="t20 l1"><svg class="i14"><use href="#geo"/></svg>几何 (米)</li>
          <li class="t20 fw-bold blue"><span class="exp"><svg width="6" height="6"><use href="#ep"/></svg></span><svg class="i20"><use href="#scn"/></svg>Scenario 1</li>
          <li class="selrow blue"><span class="exp"><svg width="6" height="6"><use href="#ep"/></svg></span><svg class="i14"><use href="#matb"/></svg>材料</li>
          <li class="l3 blue"><span class="exp"><svg width="6" height="6"><use href="#ep"/></svg></span><svg class="i14"><use href="#maty"/></svg>空气[定值]</li>
          <li class="l4 t17 blue"><svg class="i14"><use href="#cubeb"/></svg>1 CAD Volume</li>
          <li class="l3 blue"><span class="exp"><svg width="6" height="6"><use href="#ep"/></svg></span><svg class="i14"><use href="#maty"/></svg>砖[定值]</li>
          <li class="l4 t17 blue"><svg class="i14"><use href="#cubeb"/></svg>2 CAD Volume</li>
          <li class="l3 blue"><span class="exp"><svg width="6" height="6"><use href="#ep"/></svg></span><svg class="i14"><use href="#maty"/></svg>玻璃 羊毛[定值]</li>
          <li class="l4 t17 blue"><svg class="i14"><use href="#cubeb"/></svg>3 CAD Volume</li>
          <li class="l3 blue"><span class="exp"><svg width="6" height="6"><use href="#ep"/></svg></span><svg class="i14"><use href="#maty"/></svg>人[定值]</li>
          <li class="l4 t17 blue"><svg class="i14"><use href="#cubeb"/></svg>4 CAD Volume</li>
          <li class="l3 blue"><span class="exp"><svg width="6" height="6"><use href="#ep"/></svg></span><svg class="i14"><use href="#maty"/></svg>软木材[定值]</li>
          <li class="l4 t17 blue"><svg class="i14"><use href="#cubeb"/></svg>5 CAD Volume</li>
          <li class="l2 blue"><span class="exp"><svg width="7" height="8"><use href="#cl"/></svg></span><svg class="i14"><use href="#bct"/></svg>边界条件</li>
          <li class="l2x t17 blue"><svg class="i14"><use href="#ict"/></svg>初始条件</li>
          <li class="l2 blue"><span class="exp"><svg width="7" height="8"><use href="#cl"/></svg></span><svg class="i14"><use href="#msh"/></svg>网格尺寸（自动）</li>
        </ul>
        <div class="sbar d-flex flex-column">
          <svg class="arrow" viewBox="0 0 13 15"><path d="M4 9l2.500-3L9 9z" fill="#444"/></svg>
          <div class="grip d-flex align-items-center justify-content-center"><svg width="5" height="6"><path d="M0 .5h5M0 3h5M0 5.500h5" stroke="#666"/></svg></div>
          <svg class="arrow mt-auto" viewBox="0 0 13 15"><path d="M4 6h5L6.500 9z" fill="#444"/></svg>
        </div>
      </div>
      <div class="treebox">
        <ul class="tree wide">
          <li class="gone"><svg class="i20"><use href="#dec"/></svg>决策中心</li>
          <li><span class="exp"><svg width="6" height="6"><use href="#ep"/></svg></span><svg class="i20"><use href="#dev"/></svg>设计评估中心</li>
          <li class="l2x"><svg class="i14"><use href="#img"/></svg>图像 1</li>
          <li><span class="exp"><svg width="6" height="6"><use href="#ep"/></svg></span><svg class="i20"><use href="#keyv"/></svg>关键值</li>
          <li class="l2"><span class="exp"><svg width="6" height="6"><use href="#ep"/></svg></span><svg class="i20"><use href="#sum"/></svg>摘要平面</li>
          <li class="l3x"><svg class="i14"><use href="#img"/></svg>摘要 平面 1</li>
        </ul>
      </div>
    </aside>

    <div class="d-flex flex-column flex-grow-1">
      <section class="view">
        <svg class="scene" viewBox="506 178 300 320">
          <path d="M506 426V433L641 475 798 415V405z" fill="#77757c"/>
          <path d="M507 222L615 179 804 240 653 303 507 256z" fill="#3b2d49"/>
          <path d="M507 256L653 303 641 472 506 427z" fill="#2a2032"/>
          <path d="M653 303L804 242 799 408 641 472z" fill="#1e1728"/>
          <path d="M507 256L653 303 804 242M507 260L653 306 804 246M653 303L641 472M506 429L641 474 798 412" fill="none" stroke="#4a3b86"/>
          <path d="M507 222L615 179 703 208" fill="none" stroke="#2c2450"/>
          <g stroke="#44449a" stroke-width=".8"><path d="M577 189L592 183 611 189 597 195z" fill="#aeeaea"/><path d="M577 189L597 195V208L577 203z" fill="#7a9c9c"/><path d="M597 195L611 189V202L597 208z" fill="#5f7d7d"/>
          <path d="M636 271L703 245V254L647 274z" fill="#aeeaea"/><path d="M647 274L703 254V262L647 283z" fill="#5f7d7d"/><path d="M636 271L647 274V283L636 280z" fill="#7a9c9c"/></g>
          <path d="M641 473L750 430" stroke="#2aa52a"/><path d="M641 473L608 486" stroke="#24d324" stroke-width="1.500"/><path d="M602 489L611 481 615 486z" fill="#2bc72b"/>
          <circle cx="679" cy="458" r="2" fill="#9a10d8"/><circle cx="718" cy="442" r="2" fill="#9a10d8"/>
          <g font-family="DejaVu Sans Mono,monospace" font-size="7" fill="#111"><text x="695" y="462">122</text><text x="735" y="446">81</text><text x="600" y="488">y</text></g>
          <path d="M745 452v76" stroke="#8d97a5"/><path d="M745 502v26" stroke="#4f7a7d" stroke-width="2"/>
        </svg>
        <div class="legend-bar"><div><i style="background:#d8c060"></i>人</div><div><i style="background:#3e2d50"></i>玻璃 羊毛</div><div><i style="background:#b00000"></i>砖</div><div><i style="background:#c4ffff"></i>空气</div><div><i style="background:#b06000"></i>软木材</div></div>
        <div class="mini d-flex align-items-center gap-1 ps-1"><button aria-label="编辑"><svg class="i14"><use href="#edit"/></svg></button><button aria-label="删除"><svg width="9" height="4"><path d="M0 .500h9v3H0z" fill="#f08080" stroke="#d99"/></svg></button></div>

        <div class="ctx" role="menu">
          <button><span class="slot"></span>选择类型<svg class="ms-auto me-2" width="4" height="8"><path d="M0 0l4 4-4 4z" fill="#111"/></svg></button>
          <button><span class="slot chk"><svg width="10" height="10"><path d="M1 5l3 4 4-8" stroke="#1c1c9a" stroke-width="2" fill="none"/></svg></span>选择列表</button>
          <hr>
          <button><span class="slot"><svg width="12" height="10"><path d="M1 2l2 3 3-4M5 5l2 3 4-5" stroke="#3fb23a" stroke-width="1.800" fill="none"/></svg></span>全选</button>
          <button><span class="slot"><svg width="12" height="12"><path d="M1 1l4 4M5 1L1 5M6 7l4 4M10 7l-4 4" stroke="#d8431c" stroke-width="2"/></svg></span>全部取消</button>
          <button><span class="slot"><svg width="10" height="10"><path d="M4 8a3 3 0 113-1" stroke="#52647e" stroke-width="2" fill="none"/><path d="M5 6h5L7 10z" fill="#52647e"/></svg></span>上一步</button>
          <button><span class="slot"></span>组<svg class="ms-auto me-2" width="4" height="8"><path d="M0 0l4 4-4 4z" fill="#111"/></svg></button>
          <hr>
          <button><span class="slot"><svg class="i14"><use href="#edit"/></svg></span>编辑...</button>
          <button><span class="slot"><svg width="13" height="13"><g fill="#ffd9d9" stroke="#e06464" stroke-width="1.300"><circle cx="4" cy="4" r="3"/><circle cx="9" cy="9" r="3"/><path d="M2 4h4M7 9h4"/></g></svg></span>全部删除</button>
          <hr>
          <button><span class="slot"></span>显示全部</button>
          <hr>
          <button><span class="slot"><svg width="13" height="9"><path d="M1 1h2v2H1zM5 1h2v2H5zM9 1h2v2H9z" fill="#b7a533"/><path d="M1 6h7V4l4 2.500L8 9V7H1z" fill="#4b6284" stroke="#4b6284" stroke-width=".6"/></svg></span>求解...</button>
          <button><span class="slot"></span>求解管理器...</button>
          <hr>
          <button><span class="slot"></span>监控点...</button>
        </div>

        <div class="dlg dlg-a"><div class="dlg-ttl"><span>材料</span><button class="dlg-x" aria-label="关闭"><svg width="5" height="5"><use href="#xx"/></svg></button></div><div class="dlg-in"><div></div></div></div>

        <div class="dlg dlg-b"><div class="dlg-ttl"><span>材料</span><button class="dlg-x" aria-label="关闭"><svg width="5" height="5"><use href="#xx"/></svg></button></div>
          <div class="dlg-in">
            <fieldset><legend>特征设置</legend>
              <div class="propwrap"><table class="prop"><tbody><tr><td>材料</td><td>编辑...</td></tr><tr><td>材料数据库名称</td><td>Default</td></tr><tr><td>类型</td><td>流体</td></tr><tr class="red"><td>名称</td><td>空气</td></tr><tr><td>环境</td><td>设置...</td></tr></tbody></table></div>
            </fieldset>
            <div class="d-flex align-items-center justify-content-between mt-1 ps-1"><button aria-label="帮助"><svg class="i14"><use href="#help"/></svg></button><div class="d-flex btn-row"><button class="winb def">应用</button><button class="winb">删除</button><button class="winb">取消</button></div></div>
          </div>
        </div>

        <svg class="cube" viewBox="0 0 46 44"><path d="M2 4l20-4 18 4v28l-22 6L4 33z" fill="#0001"/><path d="M5 9l18-6 20 4-20 5z" fill="#f7f7f7"/><path d="M5 9l16 3 1 29L7 31z" fill="#eaeaea"/><path d="M21 12l22-5-1 28-20 6z" fill="#f3f3f3"/><path d="M5 9l18-6 20 4-1 28-20 6L7 31zM5 9l16 3 22-5M21 12l1 29" fill="none" stroke="#c2c2c2" stroke-dasharray="5 2"/><path d="M33 15v14M33 21h5M28 30l10-2M10 15v10l6 3-4-11" fill="none" stroke="#c2c2c2"/></svg>

        <div class="navb">
          <svg class="position-absolute end-0 top-0 m-1" width="6" height="6"><circle cx="3" cy="3" r="2.500" fill="none" stroke="currentColor"/></svg>
          <button aria-label="导航轮"><svg width="20" height="22" viewBox="0 0 20 22" fill="none" stroke="currentColor" stroke-width="1.300"><path d="M10 2h9v9a9 9 0 11-9-9z"/><circle cx="10" cy="11" r="6"/><circle cx="10" cy="11" r="3"/></svg></button>
          <span class="tiny"></span>
          <span class="w-75 border-top"></span>
          <button aria-label="平移" class="mt-1"><svg width="20" height="20" viewBox="0 0 20 20" fill="#fff" stroke="currentColor" stroke-width="1.200"><path d="M1 10c2-2 4 1 5 2L5 4c0-2 2-2 2 0l1 5V2c0-2 3-2 3 0v7l1-6c0-2 3-1 2 1l-1 6 3-4c1-1 3 0 2 1l-4 9c-2 4-8 4-9 1z"/></svg></button>
          <button aria-label="缩放" class="mt-1"><svg width="20" height="20" viewBox="0 0 20 20" fill="none" stroke="currentColor" stroke-width="2"><path d="M5 0v9M1 4.500h8M1 13h8"/><circle cx="13" cy="13" r="4"/><path d="M16 16l4 4"/></svg></button>
          <span class="tiny"></span>
          <button aria-label="旋转"><svg width="20" height="18" viewBox="0 0 20 18" fill="none" stroke="currentColor" stroke-width="1.300"><ellipse cx="10" cy="9" rx="3" ry="8.500"/><ellipse cx="10" cy="10" rx="9" ry="3.500"/><path d="M12 4l4 3-2 3"/></svg></button>
          <span class="tiny"></span>
          <button aria-label="查看面"><svg width="20" height="18" viewBox="0 0 20 18" fill="none" stroke="currentColor" stroke-width="1.400"><path d="M1 5h18v12H1zM5 8h10v6H5zM2 5l5-4v4l7-5v5"/></svg></button>
          <button aria-label="适应" class="mt-1"><svg width="18" height="18" viewBox="0 0 18 18" fill="none" stroke="currentColor" stroke-width="1.400"><circle cx="9" cy="9" r="8"/><path d="M6 4l3 4 3-4zM6 14l3-4 3 4zM4 6l4 3-4 3zM14 6l-4 3 4 3z" fill="currentColor" stroke="none"/></svg></button>
          <svg class="position-absolute end-0 bottom-0 m-1" width="6" height="6"><circle cx="3" cy="3" r="2.500" fill="currentColor"/></svg>
        </div>
      </section>

      <button class="outbtn">输出栏</button>
      <section class="outp">
        <div class="d-flex">
          <div class="flex-grow-1">
            <div class="d-flex">
              <button class="tabsh s40"><svg viewBox="0 0 40 12" preserveAspectRatio="none"><path d="M0 12Q3 1 6 .5H34Q37 1 40 12" fill="#fff" stroke="#333"/></svg><span>绘图</span></button>
              <button class="tabsh s40"><svg viewBox="0 0 40 12" preserveAspectRatio="none"><path d="M0 12Q3 1 6 .5H34Q37 1 40 12" fill="#eee" stroke="#333"/></svg><span>表格</span></button>
            </div>
            <div class="plotbox d-flex">
              <div class="flex-grow-1">
                <div class="plot-h">迭代 #100</div>
                <svg class="plot" viewBox="180 159 1608 402" preserveAspectRatio="none" fill="none" stroke-width="6" stroke-linejoin="round">
                  <path d="M187 170V551H1784" stroke="#000"/>
                  <path d="M187 545 240 540 330 540 400 543 510 544 540 525 600 465 665 398 750 340 850 289 940 263 1010 252 1075 241 1200 242 1340 236 1480 229 1600 226 1660 227 1784 221" stroke="#000"/>
                  <path d="M187 455 203 325 218 315 310 310 440 310 460 308 490 310 530 310 640 298 720 296 900 295 980 293 1784 292" stroke="#0f0"/>
                  <path d="M187 525 203 543 450 547 508 547 530 492 570 432 610 393 670 357 760 321 860 298 1000 273 1200 244 1320 234 1450 227 1600 225 1784 221" stroke="#00f"/>
                  <path d="M333 545 350 535 510 535 530 500 580 430 640 380 690 353 780 317 860 296 950 280 1200 243 1400 233 1520 226 1784 222" stroke="#0ff"/>
                  <path d="M187 520 203 375 218 347 250 333 310 330 430 329 460 324 480 327 510 327 530 307 570 272 630 248 680 236 780 223 850 216 950 209 1200 195 1330 189 1784 189" stroke="#f0f"/>
                  <path d="M187 549 333 549 348 497 365 463 385 443 405 435 430 431 470 431 510 428 540 400 580 340 635 287 690 259 750 239 830 230 950 227 1100 227 1200 222 1320 219 1460 224 1600 226 1700 227 1784 232" stroke="#8a8010"/>
                  <path d="M187 361H1784" stroke="#c0c0c0"/>
                </svg>
                <div class="d-flex justify-content-between"><span>1</span><span>100</span></div>
              </div>
              <ul class="key list-unstyled mb-0">
                <li>X 方向速度<hr style="background:#00f"></li><li>Y 方向速度<hr style="background:#0f0"></li><li>Z 方向速度<hr style="background:#f0f"></li><li>压力<hr style="background:#222"></li><li>温度<hr style="background:#f00"></li><li>湍动能<hr style="background:#0ff"></li><li>湍流耗散率<hr style="background:#8a8010"></li><li>标量<hr style="background:#c0c0c0"></li>
              </ul>
            </div>
          </div>
          <div class="ctl">
            <select aria-label="范围"><option>全局</option></select>
            <select aria-label="变量"><option>全部</option></select>
            <select aria-label="统计"><option>平均值</option></select>
            <label class="d-flex align-items-center gap-1 text-black-50"><input type="checkbox" disabled>对数表示</label>
            <button class="winb w-100 mt-auto">保存...</button>
          </div>
        </div>
        <div class="d-flex align-items-center runrow">
          <label for="from">开始:</label><input class="field" id="from" value="1"><label for="to">结束:</label><input class="field" id="to" value="100">
          <button class="ms-auto me-4 px-1" aria-label="帮助"><svg class="i14"><use href="#help"/></svg></button>
        </div>
      </section>
      <div class="btabs d-flex">
        <button class="tabsh s60"><svg viewBox="0 0 60 12" preserveAspectRatio="none"><path d="M0 0Q3 11 7 11.500H50Q55 11 60 0" fill="none" stroke="#333"/></svg><span>消息窗口</span></button>
        <button class="tabsh s51"><svg viewBox="0 0 60 12" preserveAspectRatio="none"><path d="M0 0Q3 11 7 11.500H50Q55 11 60 0" fill="#fff" stroke="#333"/></svg><span>收敛图</span></button>
        <button class="tabsh s48"><svg viewBox="0 0 60 12" preserveAspectRatio="none"><path d="M0 0Q3 11 7 11.500H50Q55 11 60 0" fill="none" stroke="#333"/></svg><span>关键值</span></button>
        <button class="tabsh s80 text-black-50"><svg viewBox="0 0 60 12" preserveAspectRatio="none"><path d="M0 0Q3 11 7 11.500H50Q55 11 60 0" fill="none" stroke="#999"/></svg><span>设计评估中心</span></button>
      </div>
    </div>
  </main>
  <footer class="status d-flex align-items-center justify-content-end"><span>0 体已选取</span><span class="vline h-75"></span></footer>
</div>
</div>

<span class="pin p1">1</span><span class="pin p2">2</span><span class="pin p3">3</span><span class="pin p4">4</span><span class="pin p5">5</span><span class="pin p6">6</span><span class="pin p7">7</span><span class="pin p8">8</span><span class="pin p9">9</span><span class="pin p10">10</span><span class="pin p11">11</span><span class="pin p12">12</span><span class="pin p13">13</span><span class="pin p14">14</span><span class="pin p15">15</span><span class="pin p16">16</span>
<script src="https://cdn.jsdelivr.net/npm/bootstrap@5.3.0/dist/js/bootstrap.bundle.min.js"></script>
</body>
</html>
